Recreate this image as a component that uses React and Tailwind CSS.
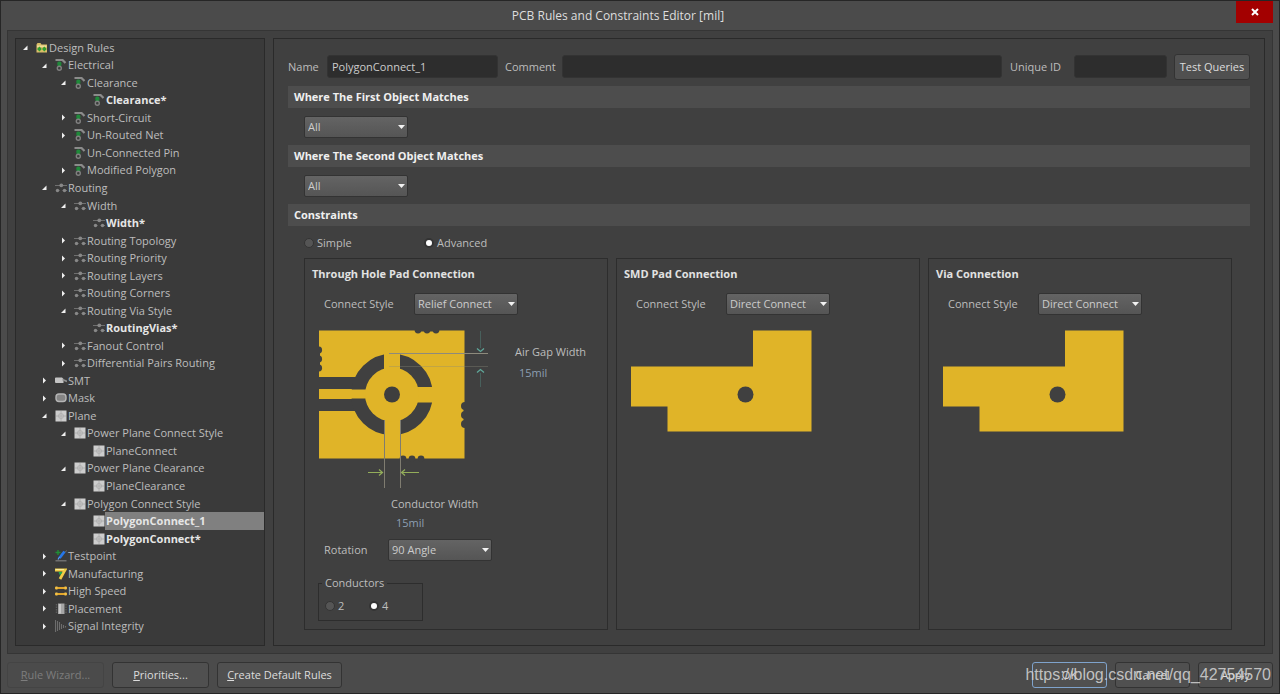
import React, { useState } from 'react';

const TREE = [
  { level: 0, icon: 'folder', label: 'Design Rules', state: 'open' },
  { level: 1, icon: 'electrical', label: 'Electrical', state: 'open' },
  { level: 2, icon: 'electrical', label: 'Clearance', state: 'open' },
  { level: 3, icon: 'electrical', label: 'Clearance*', bold: true },
  { level: 2, icon: 'electrical', label: 'Short-Circuit', state: 'closed' },
  { level: 2, icon: 'electrical', label: 'Un-Routed Net', state: 'closed' },
  { level: 2, icon: 'electrical', label: 'Un-Connected Pin' },
  { level: 2, icon: 'electrical', label: 'Modified Polygon', state: 'closed' },
  { level: 1, icon: 'routing', label: 'Routing', state: 'open' },
  { level: 2, icon: 'routing', label: 'Width', state: 'open' },
  { level: 3, icon: 'routing', label: 'Width*', bold: true },
  { level: 2, icon: 'routing', label: 'Routing Topology', state: 'closed' },
  { level: 2, icon: 'routing', label: 'Routing Priority', state: 'closed' },
  { level: 2, icon: 'routing', label: 'Routing Layers', state: 'closed' },
  { level: 2, icon: 'routing', label: 'Routing Corners', state: 'closed' },
  { level: 2, icon: 'routing', label: 'Routing Via Style', state: 'open' },
  { level: 3, icon: 'routing', label: 'RoutingVias*', bold: true },
  { level: 2, icon: 'routing', label: 'Fanout Control', state: 'closed' },
  { level: 2, icon: 'routing', label: 'Differential Pairs Routing', state: 'closed' },
  { level: 1, icon: 'smt', label: 'SMT', state: 'closed' },
  { level: 1, icon: 'mask', label: 'Mask', state: 'closed' },
  { level: 1, icon: 'plane', label: 'Plane', state: 'open' },
  { level: 2, icon: 'plane', label: 'Power Plane Connect Style', state: 'open' },
  { level: 3, icon: 'plane', label: 'PlaneConnect' },
  { level: 2, icon: 'plane', label: 'Power Plane Clearance', state: 'open' },
  { level: 3, icon: 'plane', label: 'PlaneClearance' },
  { level: 2, icon: 'plane', label: 'Polygon Connect Style', state: 'open' },
  { level: 3, icon: 'plane', label: 'PolygonConnect_1', bold: true },
  { level: 3, icon: 'plane', label: 'PolygonConnect*', bold: true },
  { level: 1, icon: 'testpoint', label: 'Testpoint', state: 'closed' },
  { level: 1, icon: 'manufacturing', label: 'Manufacturing', state: 'closed' },
  { level: 1, icon: 'highspeed', label: 'High Speed', state: 'closed' },
  { level: 1, icon: 'placement', label: 'Placement', state: 'closed' },
  { level: 1, icon: 'signal', label: 'Signal Integrity', state: 'closed' }
];

const INDENT = ['pl-[6px]', 'pl-[25px]', 'pl-[44px]', 'pl-[63px]'];

const ICONS = {
  folder: (
    <>
      <path d="M0.5 10.5V2.5L1.5 1H4.5L5.5 2.5H11V10.5Z" fill="#d9bd68" />
      <path d="M1 3.5H10.5V5H1Z" fill="#f0dc9a" />
      <path d="M1 7L3.5 4.500V9.500ZM5.800 7L3.500 4.500V9.500ZM6 7L8.300 4.500V9.500ZM10.800 7L8.300 4.500V9.500Z" fill="#2f9e2f" />
    </>
  ),
  electrical: (
    <>
      <path d="M0.500 1H7.500L10.500 4" stroke="#8b8b8b" strokeWidth="2.200" fill="none" />
      <path d="M2.500 3.500L6.200 6.500M6.200 3.500L2.500 6.500M4.300 2.500V7" stroke="#1f8a3a" strokeWidth="1.800" />
      <circle cx="4.300" cy="9.200" r="2" stroke="#808080" strokeWidth="1.400" fill="none" />
    </>
  ),
  routing: (
    <>
      <path d="M0 3.5H12M1.5 8.5H4.5M7.5 8.5H12" stroke="#6f6f6f" strokeWidth="1.2" />
      <circle cx="6.3" cy="3.3" r="1.9" fill="#888" />
      <circle cx="2.5" cy="8.5" r="1.7" fill="#888" />
      <circle cx="9.5" cy="8.5" r="1.7" fill="#888" />
    </>
  ),
  smt: (
    <>
      <path d="M0 3Q0 2.500 1 2.500H7L8.500 4V8H1Q0 8 0 7Z" fill="#c4c4c4" />
      <path d="M7.500 4.500L12 6.500" stroke="#8f8f8f" strokeWidth="1.800" />
    </>
  ),
  mask: <rect x="1" y="2" width="10" height="7.5" rx="3" fill="#858585" stroke="#b5b5b5" strokeWidth="1.4" />,
  plane: (
    <>
      <rect x="0.500" y="0.500" width="11" height="11" fill="#cdcdcd" />
      <path d="M6 1V11M1 6H11" stroke="#b0b0b0" />
      <circle cx="6" cy="6" r="2.500" fill="none" stroke="#b0b0b0" />
    </>
  ),
  testpoint: (
    <>
      <path d="M3 0V5M0.500 2.500H5.500" stroke="#1f8f35" strokeWidth="1.300" />
      <path d="M9.500 1.500L4.500 8" stroke="#2676e8" strokeWidth="2.800" />
      <path d="M4.500 7L3 9.500" stroke="#5aa0ff" strokeWidth="1.200" />
      <path d="M10 2L12 0.500" stroke="#666" />
      <path d="M0.500 10.800H11.500" stroke="#7d7d7d" strokeWidth="1.200" />
    </>
  ),
  manufacturing: (
    <>
      <path d="M0 2H10L5 11" stroke="#f0cd45" strokeWidth="2.800" fill="none" />
      <path d="M0.500 1.500H9" stroke="#fbeb9c" />
      <path d="M3.500 4H7.500L5 7.500Z" fill="#1fae4f" />
    </>
  ),
  highspeed: (
    <>
      <path d="M0 3H12M0 9H12" stroke="#e2a62b" strokeWidth="2" />
      <path d="M1.500 1.500V4.500M10.500 1.500V4.500M1.500 7.500V10.500M10.500 7.500V10.500" stroke="#f0c14c" strokeWidth="2" />
    </>
  ),
  placement: (
    <>
      <rect x="3" y="0.500" width="6.500" height="10.500" fill="#a6a6a6" />
      <path d="M1.500 1V11M11 1V11" stroke="#5c5c5c" strokeWidth="1.400" strokeDasharray="1.500 1" />
      <path d="M5 1V10.500" stroke="#c8c8c8" strokeWidth="2" />
    </>
  ),
  signal: <path d="M0.500 0V12M2.500 1V11M4.500 2V10M6.500 4V9M8.500 5V8M10.500 6V7.500" stroke="#6d6d6d" strokeWidth="1.100" />
};

function TreeArrow({ state }) {
  return (
    <svg className="w-[7px] h-[7px] shrink-0" viewBox="0 0 7 7">
      {state === 'open' && <path d="M5.500 1.500V6H1Z" fill="#f0f0f0" />}
      {state === 'closed' && <path d="M2 0.500L5 3.500L2 6.500Z" fill="#f0f0f0" />}
    </svg>
  );
}

function RuleTree() {
  const [selected, setSelected] = useState('PolygonConnect_1');
  return (
    <ul className="w-[250px] shrink-0 grid auto-rows-fr pb-[10px] bg-[#3a3a3a] border border-[#2a2a2a] text-[#bdbdbd]">
      {TREE.map((node, i) => (
        <li key={i} className={`flex items-center ${INDENT[node.level]}`} onClick={() => setSelected(node.label)}>
          <TreeArrow state={node.state} />
          <svg className="w-3 h-3 ml-[7px] shrink-0" viewBox="0 0 12 12">{ICONS[node.icon]}</svg>
          <span
            className={`flex-1 self-stretch flex items-center pl-px whitespace-nowrap cursor-default ${node.bold ? 'font-bold text-[#e6e6e6]' : ''} ${selected === node.label ? 'bg-[#808080]' : ''}`}
          >
            {node.label}
          </span>
        </li>
      ))}
    </ul>
  );
}

function Select({ id, label, options }) {
  return (
    <span className="relative inline-block w-[104px] h-[22px]">
      <select
        id={id}
        aria-label={label}
        className="appearance-none w-full h-full pl-[3px] pr-4 leading-4 rounded-[2px] border border-[#333333] bg-linear-to-b from-[#646464] to-[#555555] text-[#cccccc] outline-none"
      >
        {options.map(o => <option key={o}>{o}</option>)}
      </select>
      <svg className="absolute right-[3px] top-[9px] w-[7px] h-1 pointer-events-none" viewBox="0 0 7 4">
        <path d="M0 0H7L3.5 4Z" fill="#f2f2f2" />
      </svg>
    </span>
  );
}

function Radio({ name, label, defaultChecked, className }) {
  return (
    <label className={`flex items-center gap-[3px] ${className || ''}`}>
      <input
        type="radio"
        name={name}
        defaultChecked={defaultChecked}
        className="appearance-none w-[10px] h-[10px] rounded-full border border-[#343434] bg-[#555555] checked:border-2 checked:bg-white"
      />
      {label}
    </label>
  );
}

function Section({ title }) {
  return <h2 className="h-[22px] px-[6px] flex items-center bg-[#4d4d4d] text-[#f0f0f0] font-bold">{title}</h2>;
}

function Card({ id, title, options, children }) {
  return (
    <section className="min-w-0 border border-[#2d2d2d] pt-[7px] px-[7px]">
      <h3 className="h-4 leading-4 font-bold text-[#e2e2e2]">{title}</h3>
      <div className="flex items-center mt-[11px] pl-3">
        <label htmlFor={id} className="w-[90px]">Connect Style</label>
        <Select id={id} options={options} />
      </div>
      {children}
    </section>
  );
}

// Relief connection: ring cut out of the copper, four spokes, dimension lines
function ReliefFigure() {
  return (
    <svg className="w-[170px] h-[160px] shrink-0" viewBox="0 0 170 160">
      <rect x="0" y="0.5" width="145.500" height="128" fill="#e0b428" />
      <g fill="#404040">
        <rect x="0" y="47" width="49" height="12" />
        <rect x="0" y="69" width="49" height="12" />
        {[99, 108, 117].map(x => <circle key={x} cx={x} cy="0" r="3.4" />)}
        {[20, 29, 38].map(y => <circle key={y} cx="-0.500" cy={y} r="3.6" />)}
        {[76, 85, 94].map(y => <circle key={y} cx="146" cy={y} r="4" />)}
        {[84, 93, 102].map(x => <circle key={x} cx={x} cy="129" r="3.4" />)}
        <path d="M96 0H120V1.500H96ZM0 17V41H1V17ZM144.500 73V97H146V73Z" />
      </g>
      <circle cx="73" cy="64.500" r="33.500" fill="none" stroke="#404040" strokeWidth="14.500" />
      <g fill="#e0b428">
        <rect x="65" y="20" width="16" height="90" />
        <rect x="96" y="57" width="20" height="15.500" />
        <rect x="0" y="59.500" width="50" height="9" />
        <circle cx="73" cy="64.500" r="27" />
      </g>
      <circle cx="73" cy="64.500" r="8" fill="#3e3e3e" />
      <path d="M70 23.500H169" stroke="#8d8a7c" />
      <path d="M70 36.500H169" stroke="#8a8a7a" opacity="0.350" />
      <path d="M65.500 90V158M81.500 90V158" stroke="#7f7c70" />
      <path d="M161.500 1V18M161.500 43V57" stroke="#48605c" />
      <path d="M158 18.500L161.500 21.500L165 18.500M158 42.500L161.500 39.500L165 42.500" stroke="#5fa79a" strokeWidth="1.300" fill="none" />
      <path d="M49 142.500H63M60 139.500L63.500 142.500L60 145.500M100 142.500H83M86 139.500L82.500 142.500L86 145.500" stroke="#93ad5a" strokeWidth="1.200" fill="none" />
    </svg>
  );
}

function DirectFigure() {
  return (
    <svg className="block w-[181px] h-[102px] mt-[15px] ml-[7px]" viewBox="0 0 181 102">
      <path d="M122 0.500H180.500V101.500H36.500V76.500H0V36.500H122Z" fill="#e0b428" />
      <circle cx="114.500" cy="64.500" r="8" fill="#404040" />
    </svg>
  );
}

const INPUT = 'min-w-0 h-[23px] px-1 rounded-[3px] bg-[#2d2d2d] border border-[#333333] text-[#cccccc] outline-none';
const BUTTON = 'h-[26px] rounded-[3px] border bg-[#505050] text-[#dddddd]';
const STYLES = ['Relief Connect', 'Direct Connect', 'No Connect'];
const DIRECT_FIRST = ['Direct Connect', 'Relief Connect', 'No Connect'];

export default function App() {
  return (
    <div className="relative h-screen min-h-[690px] flex flex-col pl-[6px] pr-[6px] pb-[5px] bg-[#4b4b4b] border border-[#262626] text-[#bdbdbd] text-[11px] leading-4 font-['Open_Sans','Noto_Sans',sans-serif]">
      <header className="relative h-[29px] shrink-0 flex items-center justify-center text-xs text-[#dedede]">
        <h1 className="pr-11">PCB Rules and Constraints Editor [mil]</h1>
        <button type="button" aria-label="Close" className="absolute right-0 top-0 w-[37px] h-[22px] flex items-center justify-center bg-[#a30000]">
          <svg className="w-2 h-2" viewBox="0 0 8 8">
            <path d="M1 1L7 7M7 1L1 7" stroke="#fff" strokeWidth="2" />
          </svg>
        </button>
      </header>

      <main className="flex-1 min-h-0 flex gap-2 p-[7px] bg-[#404040] border border-[#353535]">
        <RuleTree />

        <div className="flex-1 min-w-0 flex flex-col pt-[14px] pb-[15px] px-[14px] border border-[#2a2a2a]">
          <div className="flex items-center h-[27px]">
            <label htmlFor="name" className="w-[39px]">Name</label>
            <input id="name" defaultValue="PolygonConnect_1" className={`${INPUT} w-[171px]`} />
            <label htmlFor="comment" className="w-[57px] ml-[7px]">Comment</label>
            <input id="comment" className={`${INPUT} flex-1`} />
            <label htmlFor="uid" className="w-16 ml-2">Unique ID</label>
            <input id="uid" className={`${INPUT} w-[93px]`} />
            <button type="button" className={`${BUTTON} border-[#333333] w-[76px] ml-[7px]`}>Test Queries</button>
          </div>

          <div className="flex flex-col mt-[6px]">
            <Section title="Where The First Object Matches" />
            <div className="flex pl-4 py-2 h-[37px]"><Select label="First object" options={['All', 'Net', 'Layer']} /></div>
            <Section title="Where The Second Object Matches" />
            <div className="flex pl-4 py-2 h-[37px]"><Select label="Second object" options={['All', 'Net', 'Layer']} /></div>
            <Section title="Constraints" />
          </div>

          <div className="flex items-center h-8 pt-[2px] pl-4">
            <Radio name="mode" label="Simple" className="w-[120px]" />
            <Radio name="mode" label="Advanced" defaultChecked />
          </div>

          <div className="flex-1 grid grid-cols-3 gap-2 pl-4 pr-[18px]">
            <Card id="thp" title="Through Hole Pad Connection" options={STYLES}>
              <div className="flex mt-[15px] pl-[7px]">
                <ReliefFigure />
                <div className="pl-[26px] pt-[14px]">
                  <label htmlFor="airgap" className="block whitespace-nowrap">Air Gap Width</label>
                  <input id="airgap" defaultValue="15mil" className="block w-12 h-4 mt-[5px] ml-1 bg-transparent text-[#8d9fb3] outline-none" />
                </div>
              </div>
              <div className="pl-[79px] pt-[6px]">
                <label htmlFor="conductor" className="block">Conductor Width</label>
                <input id="conductor" defaultValue="15mil" className="block w-12 h-4 mt-[3px] ml-[5px] bg-transparent text-[#8d9fb3] outline-none" />
              </div>
              <div className="flex items-center mt-2 pl-3">
                <label htmlFor="rotation" className="w-16">Rotation</label>
                <Select id="rotation" options={['90 Angle', '45 Angle']} />
              </div>
              <fieldset className="w-[105px] h-[46px] mt-[14px] ml-[6px] pl-[6px] border border-[#2d2d2d]">
                <legend className="-ml-[3px] px-[3px] leading-4">Conductors</legend>
                <div className="flex pt-[7px]">
                  <Radio name="conductors" label="2" className="w-11" />
                  <Radio name="conductors" label="4" defaultChecked />
                </div>
              </fieldset>
            </Card>
            <Card id="smd" title="SMD Pad Connection" options={DIRECT_FIRST}><DirectFigure /></Card>
            <Card id="via" title="Via Connection" options={DIRECT_FIRST}><DirectFigure /></Card>
          </div>
        </div>
      </main>

      <footer className="flex gap-2 mt-2 h-[26px] shrink-0">
        <button type="button" disabled className="w-[97px] h-[26px] rounded-[3px] border border-[#444444] text-[#7d7d7d]"><u>R</u>ule Wizard...</button>
        <button type="button" className={`${BUTTON} border-[#333333] w-[97px]`}><u>P</u>riorities...</button>
        <button type="button" className={`${BUTTON} border-[#333333] w-[125px] mr-auto`}><u>C</u>reate Default Rules</button>
        <button type="button" className={`${BUTTON} border-[#7fa3cc] w-[75px]`}>OK</button>
        <button type="button" className={`${BUTTON} border-[#333333] w-[75px]`}>Cancel</button>
        <button type="button" className={`${BUTTON} border-[#333333] w-[75px]`}>Apply</button>
      </footer>

      <p className="absolute right-2 bottom-[6px] text-base leading-6 text-[#cfcfcf]/90 pointer-events-none font-['Liberation_Sans',sans-serif]">
        https://blog.csdn.net/qq_42754570
      </p>
    </div>
  );
}
